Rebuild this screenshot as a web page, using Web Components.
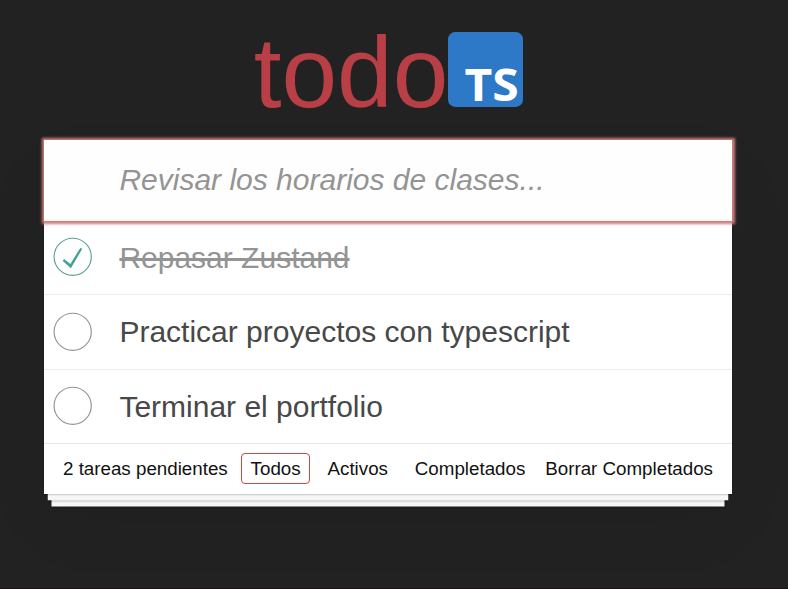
<!DOCTYPE html>
<html lang="es">
<head>
<meta charset="utf-8">
<title>todo TS</title>
<style>
html,body{margin:0;height:100%;overflow:hidden;background:#222}
body{font-family:"Liberation Sans",Arial,sans-serif;color:#111}
</style>
</head>
<body>
<todo-app></todo-app>
<script>
const define = (name, html) => customElements.define(name, class extends HTMLElement {
  constructor() {
    super();
    const t = document.createElement('template');
    t.innerHTML = html;
    this.attachShadow({mode: 'open'}).append(t.content.cloneNode(true));
  }
});

define('ts-logo', `
<style>:host{display:block;width:75px;height:75px}svg{display:block;overflow:visible}text{font:700 45.5px "Open Sans","Noto Sans",sans-serif;fill:#fff}</style>
<svg width="75" height="75" viewBox="0 0 75 75"><rect width="75" height="75" rx="7.3" fill="#2d79c7"/><text x="16.4" y="68.5" textLength="54.3" lengthAdjust="spacingAndGlyphs">TS</text></svg>`);

define('todo-header', `
<style>
:host{display:flex;justify-content:center;align-items:flex-start;height:108px;padding:32px 11px 0 0;box-sizing:border-box}
h1{margin:0;font-size:100px;font-weight:400;line-height:80px;color:#b83f45;width:194.6px}
</style>
<h1>todo</h1><ts-logo></ts-logo>`);

define('todo-input', `
<style>
:host{display:flex;align-items:center;height:81px;box-sizing:border-box;padding:0 20px 1px 75.4px;background:#fefefe;position:relative;z-index:1;
box-shadow:0 0 2.5px 2.5px #cf7d7d,inset 0 -2px 1px rgba(0,0,0,.03);font-size:30px;font-style:italic;color:#949494}
</style><span><slot></slot></span>`);

define('todo-item', `
<style>
:host{display:flex;align-items:center;box-sizing:border-box;height:74.4px;padding-left:9px;border-bottom:1px solid #ededed;font-size:30px;color:#484848}
:host([last]){border-bottom:0;height:74px}
:host([last]) span{padding-top:1px}
svg{display:block;flex:none;margin-right:26.4px}
circle{fill:none;stroke:#949494;stroke-width:1.15}
path{display:none;fill:#3ea390}
:host([done]) circle{stroke:#59a193}
:host([done]) path{display:block}
:host([done]) svg,:host([last]) svg{margin-top:-1px}
:host([done]) span{text-decoration:line-through;color:#949494}
</style>
<svg width="40" height="40" viewBox="0 0 40 40"><circle cx="19.7" cy="19.8" r="18.6"/><path d="M27.3 10.3 17.4 26.4 11 21.5 9.8 23.4 17.9 30.6 29.3 11.1Z" transform="translate(0 .6)"/></svg><span><slot></slot></span>`);

define('todo-filter', `
<style>
:host{display:block;box-sizing:border-box;height:31px;line-height:29px;padding:0 8.6px;border:1px solid transparent;border-radius:4px;white-space:nowrap}
:host([selected]){border-color:#ce4646}
</style><slot></slot>`);

define('todo-footer', `
<style>
:host{display:flex;box-sizing:border-box;height:51px;padding:9px 0 0 19px;border-top:1px solid #e6e6e6;font-size:18.75px;white-space:nowrap}
.count,.clear{line-height:31px}
.count{width:178px;flex:none}
nav{display:flex;gap:7.7px}
.clear{margin-left:auto;padding-right:19px}
</style>
<span class="count">2 tareas pendientes</span>
<nav><todo-filter selected>Todos</todo-filter><todo-filter>Activos</todo-filter><todo-filter>Completados</todo-filter></nav>
<span class="clear">Borrar Completados</span>`);

define('todo-card', `
<style>
:host{display:block;width:688px;height:354px;margin:32px 0 0 44px;background:#fff;
box-shadow:0 1.25px 1.25px rgba(0,0,0,.2),0 10px 0 -3.75px #f6f6f6,0 11.25px 1.25px -3.75px rgba(0,0,0,.2),0 20px 0 -7.5px #f6f6f6,0 21.25px 2.5px -7.5px rgba(0,0,0,.2),0 31px 62px rgba(0,0,0,.06)}
</style><slot></slot>`);

define('todo-app', `
<style>
:host{display:block;height:589px;box-sizing:border-box;border-bottom:1px solid #181316;background:#222}
section{height:222px}
</style>
<main>
<todo-header></todo-header>
<todo-card>
<todo-input>Revisar los horarios de clases...</todo-input>
<section>
<todo-item done>Repasar Zustand</todo-item>
<todo-item>Practicar proyectos con typescript</todo-item>
<todo-item last>Terminar el portfolio</todo-item>
</section>
<todo-footer></todo-footer>
</todo-card>
</main>`);
</script>
</body>
</html>
